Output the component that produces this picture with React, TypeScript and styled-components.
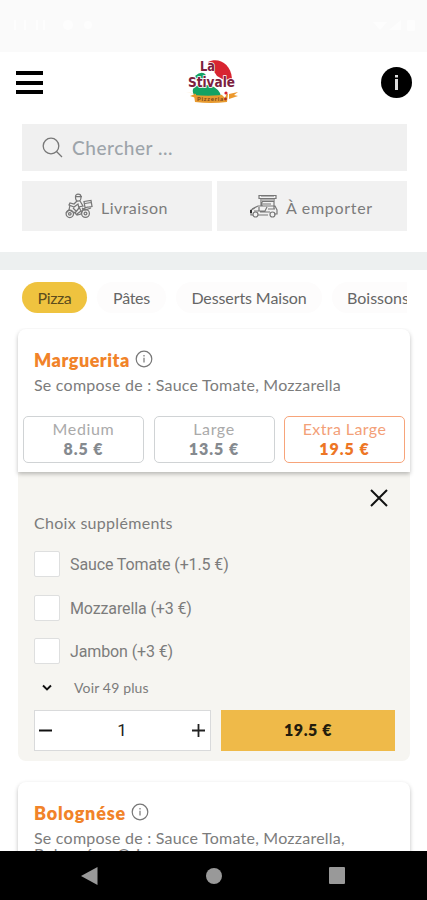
import React from 'react';
import styled, { createGlobalStyle } from 'styled-components';

const Global = createGlobalStyle`
  * { box-sizing: border-box; }
  body { margin: 0; background: #fff; font-family: Lato, "Open Sans", sans-serif; }
  button { font: inherit; color: inherit; margin: 0; padding: 0; border: 0; background: none; }
  svg { display: block; flex: none; }
`;

const Screen = styled.div`
  width: 427px;
  height: 900px;
  display: flex;
  flex-direction: column;
  overflow: hidden;
  background: #fff;
`;

const Label = styled.span<{ $size: number; $track?: number; $weight?: number; $color?: string; $roboto?: boolean }>`
  font-family: ${p => (p.$roboto ? 'Roboto' : 'Lato')}, sans-serif;
  font-size: ${p => p.$size}px;
  letter-spacing: ${p => p.$track ?? 0}px;
  font-weight: ${p => p.$weight ?? 400};
  color: ${p => p.$color ?? '#7c7c7c'};
  white-space: nowrap;
`;

const StatusBar = styled.div`
  height: 52px;
  flex: none;
  padding: 18px 8px 0 12px;
  display: flex;
  justify-content: space-between;
  background: #fafafa;
`;

const Header = styled.header`
  height: 72px;
  flex: none;
  padding: 6px 15px 0 16px;
  display: flex;
  justify-content: space-between;
  align-items: flex-start;
`;

const MenuButton = styled.button`
  width: 27px;
  height: 23px;
  margin-top: 13px;
  display: flex;
  flex-direction: column;
  justify-content: space-between;
`;

const MenuLine = styled.span`
  width: 27px;
  height: 4px;
  background: #000;
`;

const InfoButton = styled.button`
  width: 31px;
  height: 31px;
  margin-top: 9px;
`;

const Controls = styled.section`
  flex: none;
  height: 128px;
  padding: 0 20px 0 22px;
`;

const Search = styled.div`
  height: 47px;
  padding: 0 20px 1px;
  display: flex;
  align-items: center;
  gap: 9px;
  background: #f0f0f0;
`;

const Modes = styled.div`
  display: grid;
  grid-template-columns: 190px 190px;
  gap: 5px;
  margin-top: 10px;
`;

const ModeButton = styled.button<{ $left: number }>`
  height: 50px;
  padding: 3px 0 0 ${p => p.$left}px;
  display: flex;
  align-items: center;
  gap: 8px;
  background: #f1f1f1;
  svg { margin-top: -3px; }
`;

const Band = styled.div`
  height: 18px;
  flex: none;
  background: #edf0f0;
`;

const Tabs = styled.nav`
  flex: none;
  height: 58px;
  margin: 0 20px 0 22px;
  padding-top: 12px;
  display: flex;
  gap: 10px;
  overflow: hidden;
`;

const Tab = styled.button<{ $width: number; $active?: boolean }>`
  flex: none;
  width: ${p => p.$width}px;
  height: 31px;
  border-radius: 16px;
  padding-bottom: 1px;
  display: flex;
  align-items: center;
  justify-content: center;
  background: ${p => (p.$active ? '#efc33f' : '#fdfcfc')};
`;

const List = styled.main`
  flex: 1;
  min-height: 0;
  overflow: hidden;
  padding: 0 17px 0 18px;
`;

const Card = styled.article<{ $next?: boolean }>`
  position: relative;
  height: 143px;
  margin-top: ${p => (p.$next ? 21 : 1)}px;
  border-radius: ${p => (p.$next ? '8px' : '8px 8px 0 0')};
  background: #fff;
  box-shadow: 0 2px 4px rgba(0, 0, 0, 0.26);
`;

const CardHead = styled.div`
  padding: 19px 0 0 16px;
  height: 87px;
`;

const Title = styled.div`
  display: flex;
  align-items: center;
  height: 24px;
  gap: 5px;
  svg { margin-top: -3px; }
`;

const Description = styled.p`
  margin: 5px 0 0;
  line-height: 16px;
`;

const Sizes = styled.div`
  display: grid;
  grid-template-columns: repeat(3, 121px);
  gap: 9.5px;
  padding-left: 5px;
`;

const SizeOption = styled.button<{ $selected?: boolean }>`
  height: 47px;
  border: 1px solid ${p => (p.$selected ? '#f7a47a' : '#d0d3d5')};
  border-radius: 5px;
  display: flex;
  flex-direction: column;
  align-items: center;
  justify-content: center;
  padding-bottom: 2px;
  line-height: 19.5px;
  background: #fff;
`;

const Extras = styled.section`
  height: 289px;
  padding: 16px 15px 0 16px;
  border-radius: 0 0 8px 8px;
  background: #f6f5f1;
`;

const CloseButton = styled.button`
  display: block;
  margin: 0 6px 0 auto;
`;

const ExtrasTitle = styled.div`
  height: 43px;
  padding-top: 5px;
`;

const Extra = styled.label`
  height: 43.5px;
  display: flex;
  align-items: flex-start;
  gap: 10px;
  line-height: 27px;
`;

const CheckBox = styled.span`
  width: 26px;
  height: 26px;
  background: #fff;
  border: 1px solid #dedfdf;
  border-radius: 2px;
`;

const More = styled.button`
  display: flex;
  align-items: center;
  gap: 21px;
  height: 20px;
  margin: -4px 0 0 7px;
`;

const Order = styled.div`
  display: grid;
  grid-template-columns: 177px 174px;
  gap: 10px;
  margin-top: 12px;
`;

const Quantity = styled.div`
  height: 41px;
  padding: 0 5px 0 4px;
  display: flex;
  align-items: center;
  justify-content: space-between;
  border: 1px solid #d9dadb;
  background: #fff;
`;

const AddButton = styled.button`
  height: 41px;
  padding-bottom: 1px;
  background: #efba49;
`;

const AndroidBar = styled.footer`
  height: 49px;
  flex: none;
  padding: 0 82px 0 81px;
  display: flex;
  align-items: center;
  justify-content: space-between;
  background: #000;
`;

const InfoIcon = () => (
  <svg width="18" height="18" viewBox="0 0 18 18" fill="none" stroke="#777" strokeWidth="1.2">
    <circle cx="9" cy="9" r="7.8" />
    <path d="M9 5v1.6M9 7.8v4.8" />
  </svg>
);

const Scooter = () => (
  <svg width="28" height="26" viewBox="0 0 28 26" fill="none" stroke="#777" strokeWidth="1.25">
    <circle cx="4.8" cy="20.8" r="3.7" /><circle cx="4.8" cy="20.8" r="1.3" />
    <circle cx="20.5" cy="20.5" r="3.9" /><circle cx="20.5" cy="20.5" r="1.4" />
    <path d="M10.5 4C10 .3 16 .3 16 4S15 8 13 8s-2.5-2-2.5-4M10 3.5h7M12 8l-3 3-4-1-1 2 5 2 4-3 1 4-4 5M15 8l3 5-5 1M5 12l-1 5-3 3M9 19l3 3 4-1 2-5 5-2M19 8.5l7-1 1 6-7 1zM20 10.5l6-1M17 15l3 2 6-2M14 14l2 4-4 3M4 17l6 3M8 15l3 3" />
  </svg>
);

const FoodTruck = () => (
  <svg width="28" height="26" viewBox="0 0 28 26" fill="none" stroke="#777" strokeWidth="1.2">
    <path d="M9 2.5h17v3H9zM11 5.5v8M24 5.5v10M12 8.5h12M13 11h8M2 16l6-3h17l2 4v4h-3M18 22H8M3 22H1v-5l4-2M9 14v4h6l2-4M10 19h10M12 9v4M4 18h7M18 16h7" />
    <path d="M11 2.8h13M12 7h11" />
    <path d="M1 17v3" stroke="#222" strokeWidth="1.8" />
    <circle cx="5.5" cy="21.5" r="2.5" /><circle cx="22.5" cy="21.5" r="2.5" />
  </svg>
);

const LogoWord = styled.text`
  font-family: "DejaVu Sans", sans-serif;
  fill: #7c203d;
  stroke: #fff;
  stroke-width: 1.6px;
  paint-order: stroke;
`;

const Logo = () => (
  <svg width="53" height="47" viewBox="0 0 53 47">
    <path d="M22 4C32-1 45 5 46 21L38 22 31 18 27 12Z" fill="#d82430" />
    <path d="M9 18q7-6 11-1l-2 5-7-1zM7 31q4-5 13-4 9 0 14 8l1 3H9Q6 35 7 31Z" fill="#13a263" />
    <path d="m20 14 8 1 9 12 5 7-3 7-4-4-1-5-11-9z" fill="#fff" />
    <path d="m0 34 9 2-5 2 6 2v-4zM43 36l9-2-4 3 4 1-9 3z" fill="#ec982d" />
    <path d="M8 37q18 2 34-1l-1 8q-16 2-32 0z" fill="#e79a2f" />
    <LogoWord x="14" y="13" fontSize="14" fontWeight="700" textLength="15" lengthAdjust="spacingAndGlyphs">La</LogoWord>
    <LogoWord x="2" y="29" fontSize="14.5" fontWeight="700" textLength="47" lengthAdjust="spacingAndGlyphs">Stivale</LogoWord>
    <text x="11" y="43" fontFamily="Lato" fontSize="6" fontWeight="700" fill="#78451e" textLength="26">Pizzeria</text>
    <path d="m37 31 5 1-3 8-3-3z" fill="#fff" />
    <circle cx="40" cy="35" r="1.6" fill="#d82430" />
    <circle cx="39.5" cy="41" r="1.4" fill="#b02920" />
  </svg>
);

const extras = ['Sauce Tomate (+1.5 €)', 'Mozzarella (+3 €)', 'Jambon (+3 €)'];

export default function App() {
  return (
    <Screen>
      <Global />
      <StatusBar>
        <svg width="90" height="14" viewBox="0 0 90 14" fill="#fdfdfd">
          <path d="M2 2h2v10H2zM12 2h2v10h-2zM24 2h2v10h-2zM31 2h2v10h-2z" />
          <circle cx="56" cy="7" r="5" /><circle cx="76" cy="7" r="4" />
        </svg>
        <svg width="48" height="14" viewBox="0 0 48 14" fill="#fdfdfd">
          <path d="M2 4h14l-7 8zM18 12 30 2v10z" /><rect x="36" y="2" width="8" height="11" rx="1" />
        </svg>
      </StatusBar>
      <Header>
        <MenuButton aria-label="Menu"><MenuLine /><MenuLine /><MenuLine /></MenuButton>
        <Logo />
        <InfoButton aria-label="Informations">
          <svg width="31" height="31" viewBox="0 0 31 31">
            <circle cx="15.5" cy="15.5" r="15.5" />
            <path d="M14 8h3v2.5h-3zM14 12h3v11h-3z" fill="#ddd" />
          </svg>
        </InfoButton>
      </Header>
      <Controls>
        <Search>
          <svg width="21" height="21" viewBox="0 0 21 21" fill="none" stroke="#777" strokeWidth="1.3">
            <circle cx="9" cy="9" r="7.8" /><path d="m14.5 14.5 5.5 5.5" />
          </svg>
          <Label $size={19} $track={0.55} $weight={500} $color="#9da4aa">Chercher ...</Label>
        </Search>
        <Modes>
          <ModeButton $left={43}><Scooter /><Label $size={16} $track={0.45}>Livraison</Label></ModeButton>
          <ModeButton $left={33}><FoodTruck /><Label $size={16} $track={0.7}>À emporter</Label></ModeButton>
        </Modes>
      </Controls>
      <Band />
      <Tabs>
        <Tab $active $width={65}><Label $size={16} $track={-0.4} $color="#5d4d1d">Pizza</Label></Tab>
        <Tab $width={69}><Label $size={16} $track={-0.3} $color="#666">Pâtes</Label></Tab>
        <Tab $width={146}><Label $size={16} $track={-0.1} $color="#666">Desserts Maison</Label></Tab>
        <Tab $width={92}><Label $size={16} $track={0} $color="#666">Boissons</Label></Tab>
      </Tabs>
      <List>
        <Card>
          <CardHead>
            <Title><Label $size={18} $track={0.5} $weight={800} $color="#f18329">Marguerita</Label><InfoIcon /></Title>
            <Description><Label $size={16} $track={0.23}>Se compose de : Sauce Tomate, Mozzarella</Label></Description>
          </CardHead>
          <Sizes>
            <SizeOption>
              <Label $size={16} $track={0.65} $color="#aaa">Medium</Label>
              <Label $size={16} $track={0.9} $weight={800} $color="#858a8f">8.5 €</Label>
            </SizeOption>
            <SizeOption>
              <Label $size={16} $track={0.6} $color="#aaa">Large</Label>
              <Label $size={16} $track={1} $weight={800} $color="#858a8f">13.5 €</Label>
            </SizeOption>
            <SizeOption $selected>
              <Label $size={16} $track={0.4} $color="#f3a078">Extra Large</Label>
              <Label $size={16} $track={1} $weight={800} $color="#ed7625">19.5 €</Label>
            </SizeOption>
          </Sizes>
        </Card>
        <Extras>
          <CloseButton aria-label="Fermer">
            <svg width="20" height="20" viewBox="0 0 20 20" stroke="#111" strokeWidth="2"><path d="m2 2 16 16M18 2 2 18" /></svg>
          </CloseButton>
          <ExtrasTitle><Label $size={16} $track={0.3}>Choix suppléments</Label></ExtrasTitle>
          {extras.map(name => (
            <Extra key={name}><CheckBox /><Label $roboto $size={16} $track={-0.12}>{name}</Label></Extra>
          ))}
          <More>
            <svg width="12" height="8" viewBox="0 0 12 8" fill="none" stroke="#111" strokeWidth="1.9"><path d="m2 1.5 4 4 4-4" /></svg>
            <Label $size={14} $track={0.15}>Voir 49 plus</Label>
          </More>
          <Order>
            <Quantity>
              <svg width="13" height="13" viewBox="0 0 13 13" stroke="#111" strokeWidth="2"><path d="M0 6.5h13" /></svg>
              <Label $roboto $size={17} $color="#222">1</Label>
              <svg width="13" height="13" viewBox="0 0 13 13" stroke="#222" strokeWidth="1.8"><path d="M0 6.5h13M6.5 0v13" /></svg>
            </Quantity>
            <AddButton><Label $size={16} $track={0.6} $weight={800} $color="#231c0c">19.5 €</Label></AddButton>
          </Order>
        </Extras>
        <Card $next>
          <CardHead>
            <Title><Label $size={18} $track={0.8} $weight={800} $color="#f18329">Bolognése</Label><InfoIcon /></Title>
            <Description>
              <Label $size={16} $track={0.23}>Se compose de : Sauce Tomate, Mozzarella,<br />Bolognése, Origan</Label>
            </Description>
          </CardHead>
        </Card>
      </List>
      <AndroidBar>
        <svg width="17" height="18" viewBox="0 0 17 18" fill="#999"><path d="M0 9 16.5 0v18z" /></svg>
        <svg width="16" height="16" viewBox="0 0 16 16" fill="#999"><circle cx="8" cy="8" r="8" /></svg>
        <svg width="16" height="17" viewBox="0 0 16 17" fill="#999"><rect width="16" height="17" rx="1" /></svg>
      </AndroidBar>
    </Screen>
  );
}
